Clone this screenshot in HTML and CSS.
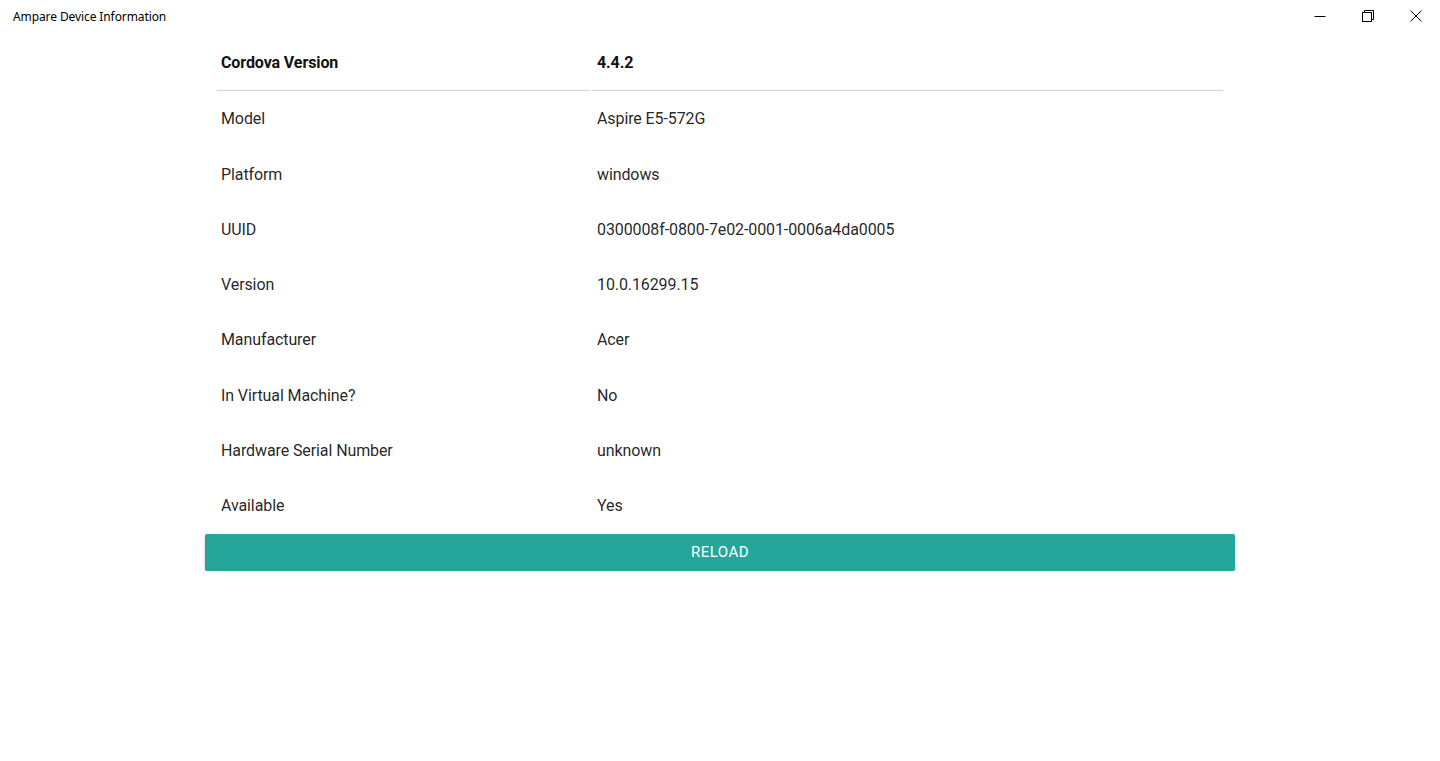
FILE: index.html
```html
<!DOCTYPE html>
<html lang="en">
<head>
    <meta charset="UTF-8">
    <meta name="viewport" content="width=device-width, initial-scale=1.0">
    <title>Ampare Device Information</title>
    <link rel="stylesheet" href="styles.css">
</head>
<body>
    <div class="titlebar">
        <span class="app-title">Ampare Device Information</span>
        <div class="win-controls">
            <span class="win-btn">
                <svg width="12" height="12" viewBox="0 0 12 12"><path d="M0.5 6.5h11" stroke="#000" stroke-width="1"/></svg>
            </span>
            <span class="win-btn">
                <svg width="12" height="12" viewBox="0 0 12 12" fill="none" stroke="#000" stroke-width="1">
                    <rect x="0.5" y="2.5" width="9" height="9"/>
                    <path d="M2.5 2.5v-2h9v9h-2"/>
                </svg>
            </span>
            <span class="win-btn">
                <svg width="12" height="12" viewBox="0 0 12 12"><path d="M0.5 0.5l11 11M11.5 0.5l-11 11" stroke="#000" stroke-width="1"/></svg>
            </span>
        </div>
    </div>

    <div class="container">
        <table class="info-table">
            <thead>
                <tr>
                    <th>Cordova Version</th>
                    <th>4.4.2</th>
                </tr>
            </thead>
            <tbody>
                <tr><td>Model</td><td>Aspire E5-572G</td></tr>
                <tr><td>Platform</td><td>windows</td></tr>
                <tr><td>UUID</td><td>0300008f-0800-7e02-0001-0006a4da0005</td></tr>
                <tr><td>Version</td><td>10.0.16299.15</td></tr>
                <tr><td>Manufacturer</td><td>Acer</td></tr>
                <tr><td>In Virtual Machine?</td><td>No</td></tr>
                <tr><td>Hardware Serial Number</td><td>unknown</td></tr>
                <tr><td>Available</td><td>Yes</td></tr>
            </tbody>
        </table>
        <button class="btn-reload">Reload</button>
    </div>
</body>
</html>
```

FILE: styles.css
```css
body {
    margin: 0;
    background: #fff;
    font-family: Roboto, "Liberation Sans", sans-serif;
    color: rgba(0, 0, 0, 0.87);
}

.titlebar {
    height: 32px;
    display: flex;
    align-items: center;
    justify-content: space-between;
}

.app-title {
    margin-left: 13px;
    font-family: "Noto Sans", "Liberation Sans", sans-serif;
    font-size: 12px;
    letter-spacing: -0.1px;
    color: #000;
}

.win-controls {
    display: flex;
    height: 32px;
}

.win-btn {
    width: 48px;
    display: flex;
    align-items: center;
    justify-content: center;
}

.win-btn svg {
    display: block;
}

.container {
    width: 1030px;
    margin: 3px auto 0;
}

.info-table {
    width: 1006px;
    margin: 0 12px;
    border-collapse: separate;
    border-spacing: 0;
    font-size: 16px;
    letter-spacing: -0.1px;
}

.info-table th,
.info-table td {
    text-align: left;
    padding: 16px 4px;
    line-height: 23.3px;
    vertical-align: middle;
}

.info-table th {
    font-weight: bold;
    color: #111;
    border-bottom: 1px solid #d4d4d4;
}

.info-table th:first-child,
.info-table td:first-child {
    width: 365px;
}

.info-table th + th {
    border-left: 3px solid #fff;
}

.info-table td + td {
    padding-left: 7px;
}

.btn-reload {
    display: block;
    width: 100%;
    height: 37px;
    margin-top: 0;
    border: none;
    border-radius: 2px;
    background-color: #26a69a;
    color: #fff;
    font-family: Roboto, "Liberation Sans", sans-serif;
    font-size: 15px;
    letter-spacing: 0.5px;
    text-transform: uppercase;
    box-shadow: 0 2px 2px 0 rgba(0, 0, 0, 0.14), 0 1px 5px 0 rgba(0, 0, 0, 0.12), 0 3px 1px -2px rgba(0, 0, 0, 0.2);
    cursor: pointer;
}
```
